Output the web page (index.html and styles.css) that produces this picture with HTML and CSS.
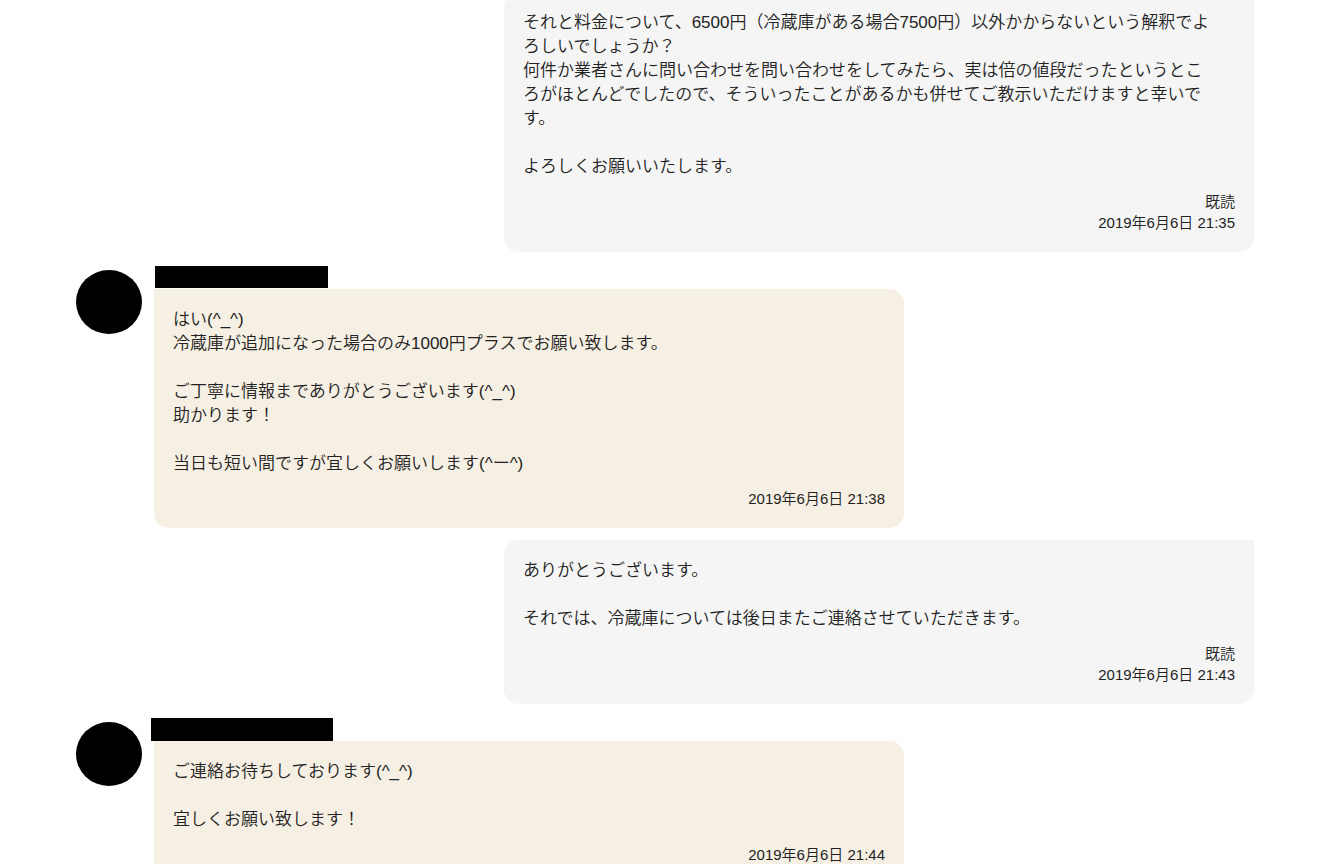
FILE: index.html
```
<!DOCTYPE html>
<html lang="ja">
<head>
    <meta charset="utf-8">
    <meta name="viewport" content="width=device-width, initial-scale=1">
    <title>メッセージ</title>
    <link rel="stylesheet" href="styles.css">
</head>
<body>
  <main class="chat">
    <article class="message sent">
      <div class="bubble">
        <p class="text">それと料金について、6500円（冷蔵庫がある場合7500円）以外かからないという解釈でよろしいでしょうか？<br>
        何件か業者さんに問い合わせを問い合わせをしてみたら、実は倍の値段だったというところがほとんどでしたので、そういったことがあるかも併せてご教示いただけますと幸いです。<br>
        <br>
        よろしくお願いいたします。</p>
        <div class="meta">既読<br><time datetime="2019-06-06T21:35">2019年6月6日 21:35</time></div>
      </div>
    </article>

    <article class="message received">
      <div class="avatar"></div>
      <div class="body">
        <div class="name"><span class="mask"></span></div>
        <div class="bubble">
          <p class="text">はい(^_^)<br>
          冷蔵庫が追加になった場合のみ1000円プラスでお願い致します。<br>
          <br>
          ご丁寧に情報までありがとうございます(^_^)<br>
          助かります！<br>
          <br>
          当日も短い間ですが宜しくお願いします(^ー^)</p>
          <div class="meta"><time datetime="2019-06-06T21:38">2019年6月6日 21:38</time></div>
        </div>
      </div>
    </article>

    <article class="message sent">
      <div class="bubble">
        <p class="text">ありがとうございます。<br>
        <br>
        それでは、冷蔵庫については後日またご連絡させていただきます。</p>
        <div class="meta">既読<br><time datetime="2019-06-06T21:43">2019年6月6日 21:43</time></div>
      </div>
    </article>

    <article class="message received">
      <div class="avatar"></div>
      <div class="body">
        <div class="name"><span class="mask mask-wide"></span></div>
        <div class="bubble">
          <p class="text">ご連絡お待ちしております(^_^)<br>
          <br>
          宜しくお願い致します！</p>
          <div class="meta"><time datetime="2019-06-06T21:44">2019年6月6日 21:44</time></div>
        </div>
      </div>
    </article>
  </main>
</body>
</html>
```
FILE: styles.css
```
* {
    box-sizing: border-box;
}

body {
    margin: 0;
    height: 100vh;
    overflow: hidden;
    background: #fff;
    color: #222;
    font-family: "Liberation Sans", "Noto Sans CJK JP", sans-serif;
    font-size: 17px;
    font-weight: 350;
    line-height: 24px;
}

/* the list is scrolled, so the first bubble starts above the window */
.chat {
    display: flex;
    flex-direction: column;
    gap: 12px;
    margin-top: -8px;
    padding: 0 86px 0 76px;
}

.message {
    display: flex;
    gap: 12px;
}

.sent {
    justify-content: flex-end;
}

.body {
    min-width: 0;
}

.avatar {
    flex: none;
    width: 66px;
    height: 64px;
    margin-top: 6px;
    border-radius: 50%;
    background: #000;
}

.name {
    display: flex;
    align-items: flex-end;
    height: 25px;
}

.mask {
    width: 173px;
    height: 22px;
    margin: 0 0 1px 1px;
    background: #000;
}

.mask-wide {
    width: 182px;
    height: 23px;
    margin: 0 0 0 -3px;
}

.bubble {
    width: 750px;
    max-width: 100%;
    padding: 19px;
    border-radius: 15px;
}

.sent .bubble {
    background: #f5f5f5;
    border-top-right-radius: 0;
}

.received .bubble {
    background: #f6efe3;
    border-top-left-radius: 0;
}

.text {
    margin: 0 0 12px;
    padding-right: 20px;
}

.meta {
    font-size: 15px;
    line-height: 21px;
    text-align: right;
}
```
